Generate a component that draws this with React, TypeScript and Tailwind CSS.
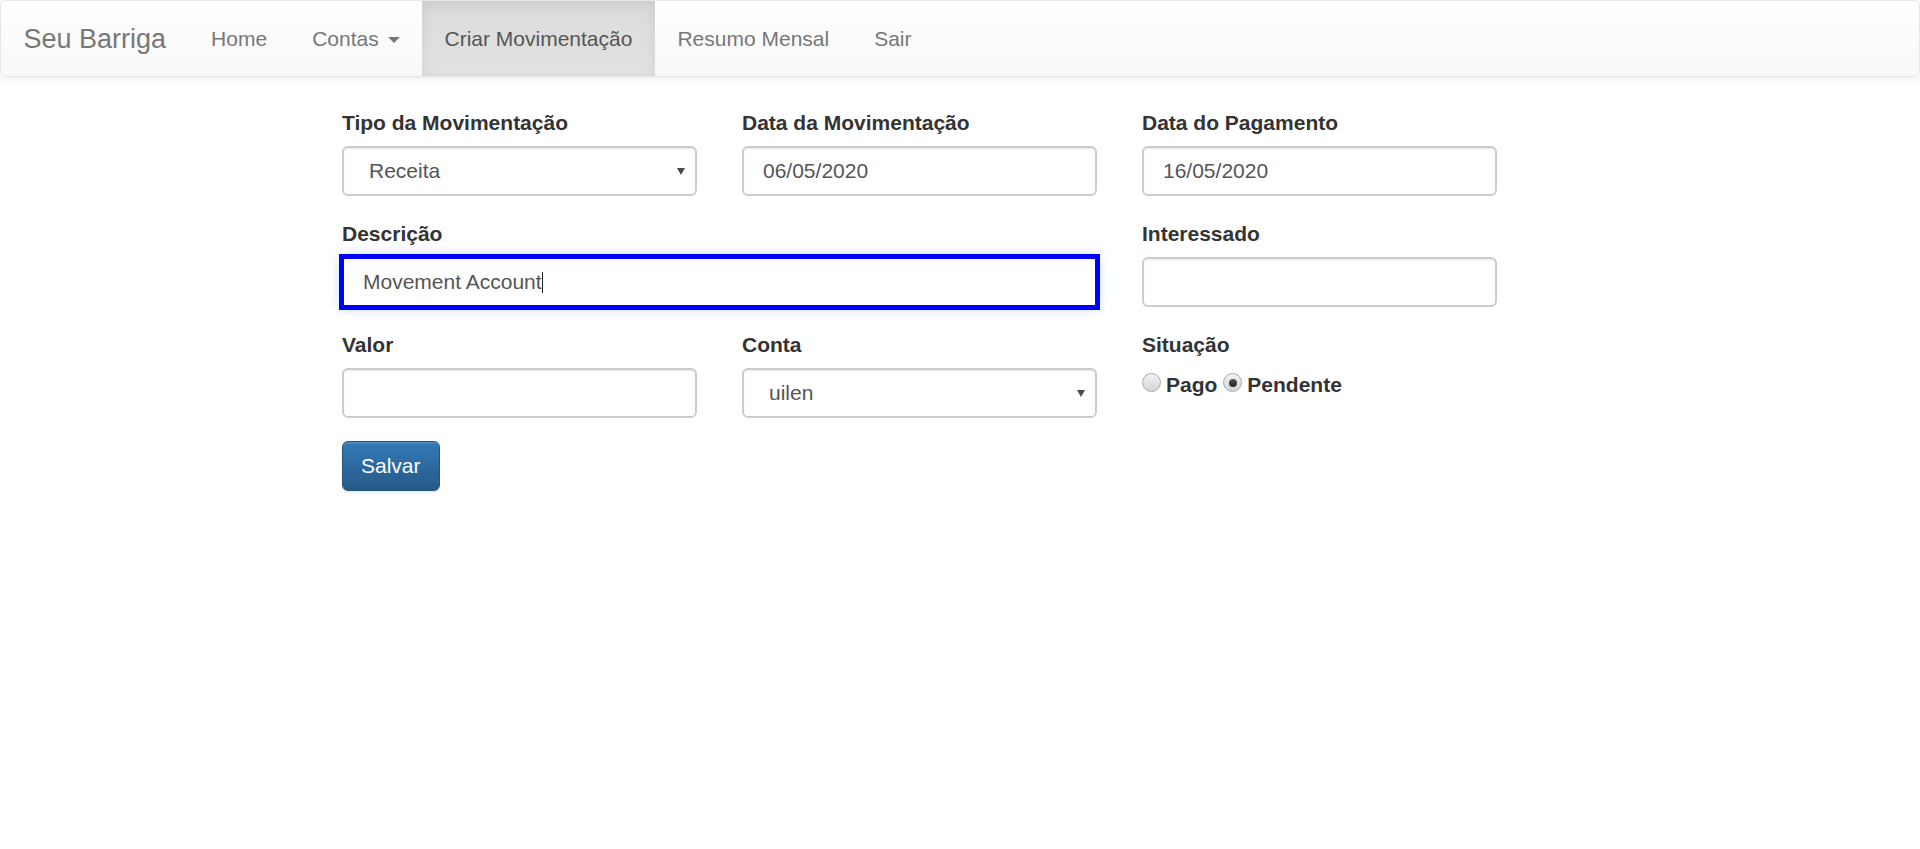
import React from "react";

const font = { fontFamily: '"Liberation Sans", Arial, sans-serif' };

function Arrow() {
  return (
    <svg className="absolute right-[10px] top-1/2 -translate-y-1/2" width="8" height="8" viewBox="0 0 8 8">
      <path d="M0 1 L8 1 L4 8 Z" fill="#4a4a4a" />
    </svg>
  );
}

// Label + control block
function Field({ label, span, children }: { label: string; span?: boolean; children: React.ReactNode }) {
  return (
    <div className={span ? "col-span-2" : ""}>
      <div className="h-[30px] mb-[8px] text-[21px] leading-[30px] font-bold text-[#333]">{label}</div>
      {children}
    </div>
  );
}

function TextBox({ value }: { value?: string }) {
  return (
    <div className="h-[50px] w-full flex items-center px-[19px] border-2 border-[#ccc] rounded-[6px] bg-white text-[21px] text-[#555] shadow-[inset_0_1.5px_1.5px_rgba(0,0,0,0.075)]">
      {value}
    </div>
  );
}

function SelectBox({ value }: { value: string }) {
  return (
    <div className="relative h-[50px] w-full flex items-center pl-[25px] border-2 border-[#ccc] rounded-[6px] bg-white text-[21px] text-[#555] shadow-[inset_0_1.5px_1.5px_rgba(0,0,0,0.075)]">
      {value}
      <Arrow />
    </div>
  );
}

function Radio({ checked }: { checked?: boolean }) {
  return (
    <span className="mb-[5px] w-[19px] h-[19px] rounded-full border border-[#a9a9a9] bg-linear-to-b from-[#f4f4f4] to-[#d4d4d4] flex items-center justify-center">
      {checked && <span className="w-[8px] h-[8px] rounded-full bg-linear-to-b from-[#555] to-[#222]" />}
    </span>
  );
}

function NavLink({ children, active }: { children: React.ReactNode; active?: boolean }) {
  return (
    <div
      className={
        "px-[22.5px] py-[22.5px] text-[21px] leading-[30px] " +
        (active
          ? "text-[#555] bg-linear-to-b from-[#dbdbdb] to-[#e2e2e2] shadow-[inset_0_4.5px_13.5px_rgba(0,0,0,0.075)]"
          : "text-[#777]")
      }
    >
      {children}
    </div>
  );
}

export default function App() {
  return (
    <div className="min-h-screen bg-white" style={font}>
      {/* Navbar */}
      <div className="flex h-[77px] border border-[#e7e7e7] rounded-[6px] bg-linear-to-b from-white to-[#f8f8f8] shadow-[0_1.5px_7.5px_rgba(0,0,0,0.075)] overflow-hidden">
        <div className="pl-[22.5px] pr-[22.5px] py-[22.5px] text-[27px] leading-[30px] text-[#777]">Seu Barriga</div>
        <NavLink>Home</NavLink>
        <NavLink>
          Contas{" "}
          <span className="inline-block align-middle ml-[3px] w-0 h-0 border-t-[6px] border-t-[#777] border-x-[6px] border-x-transparent" />
        </NavLink>
        <NavLink active>Criar Movimentação</NavLink>
        <NavLink>Resumo Mensal</NavLink>
        <NavLink>Sair</NavLink>
      </div>

      {/* Form */}
      <div className="ml-[342px] mt-[31px] w-[1155px]">
        <div className="grid grid-cols-[355px_355px_355px] gap-x-[45px] gap-y-[23px]">
          <Field label="Tipo da Movimentação">
            <SelectBox value="Receita" />
          </Field>
          <Field label="Data da Movimentação">
            <TextBox value="06/05/2020" />
          </Field>
          <Field label="Data do Pagamento">
            <TextBox value="16/05/2020" />
          </Field>

          <Field label="Descrição" span>
            <div className="h-[50px] w-full flex items-center px-[19px] border-2 border-[#66afe9] rounded-none bg-white text-[21px] text-[#555] outline-[5px] outline-solid outline-[#0000ff] outline-offset-[-2px] shadow-[0_0_12px_rgba(102,175,233,0.6)]">
              Movement Account
              <span className="w-px h-[21px] bg-[#222]" />
            </div>
          </Field>
          <Field label="Interessado">
            <TextBox />
          </Field>

          <Field label="Valor">
            <TextBox />
          </Field>
          <Field label="Conta">
            <SelectBox value="uilen" />
          </Field>
          <Field label="Situação">
            <div className="mt-[10px] h-[30px] flex items-center text-[21px] font-bold text-[#333]">
              <Radio />
              <span className="ml-[5px] mr-[6px]">Pago</span>
              <Radio checked />
              <span className="ml-[5px]">Pendente</span>
            </div>
          </Field>
        </div>

        <button className="mt-[23px] h-[50px] px-[18px] rounded-[6px] border border-[#245580] bg-linear-to-b from-[#337ab7] to-[#265a88] text-white text-[21px] shadow-[inset_0_1.5px_0_rgba(255,255,255,0.15),0_1.5px_1.5px_rgba(0,0,0,0.075)]">
          Salvar
        </button>
      </div>
    </div>
  );
}
